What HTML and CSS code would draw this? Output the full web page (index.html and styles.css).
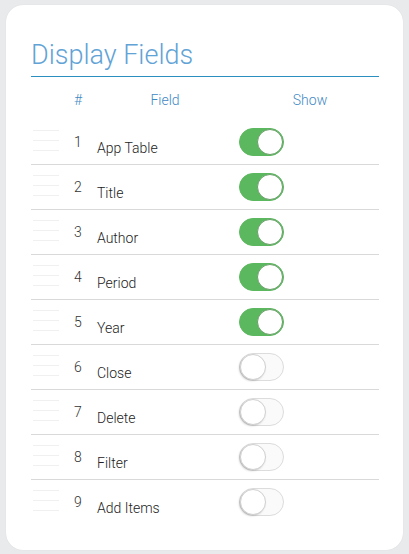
FILE: index.html
```html
<!DOCTYPE html>
<html>
<head>
<meta charset="utf-8">
<link rel="stylesheet" href="styles.css">
</head>
<body>
<div class="card">
  <h1 class="title">Display Fields</h1>
  <div class="head">
    <span></span>
    <span class="h-num">#</span>
    <span class="h-field">Field</span>
    <span class="h-show">Show</span>
  </div>
  <div class="rows">
    <div class="row"><span class="handle"><i></i><i></i><i></i></span><span class="num">1</span><span class="field">App Table</span><span class="toggle on"><b></b></span></div>
    <div class="row"><span class="handle"><i></i><i></i><i></i></span><span class="num">2</span><span class="field">Title</span><span class="toggle on"><b></b></span></div>
    <div class="row"><span class="handle"><i></i><i></i><i></i></span><span class="num">3</span><span class="field">Author</span><span class="toggle on"><b></b></span></div>
    <div class="row"><span class="handle"><i></i><i></i><i></i></span><span class="num">4</span><span class="field">Period</span><span class="toggle on"><b></b></span></div>
    <div class="row"><span class="handle"><i></i><i></i><i></i></span><span class="num">5</span><span class="field">Year</span><span class="toggle on"><b></b></span></div>
    <div class="row"><span class="handle"><i></i><i></i><i></i></span><span class="num">6</span><span class="field">Close</span><span class="toggle"><b></b></span></div>
    <div class="row"><span class="handle"><i></i><i></i><i></i></span><span class="num">7</span><span class="field">Delete</span><span class="toggle"><b></b></span></div>
    <div class="row"><span class="handle"><i></i><i></i><i></i></span><span class="num">8</span><span class="field">Filter</span><span class="toggle"><b></b></span></div>
    <div class="row"><span class="handle"><i></i><i></i><i></i></span><span class="num">9</span><span class="field">Add Items</span><span class="toggle"><b></b></span></div>
  </div>
</div>
</body>
</html>
```
FILE: styles.css
```css
html, body {
  margin: 0;
  padding: 0;
  background: #e9eaeb;
  font-family: Roboto, "Liberation Sans", sans-serif;
}
.card {
  box-sizing: border-box;
  margin: 5px 6px;
  width: 397px;
  height: 545px;
  background: #fff;
  border-radius: 17px;
  box-shadow: 0 0 1px rgba(0,0,0,0.12);
  padding: 35px 24px 0 25px;
}
.title {
  margin: 0;
  font-size: 27px;
  line-height: 31px;
  font-weight: 300;
  color: #62a3d6;
  padding-bottom: 5px;
  border-bottom: 1px solid #2b8fbf;
}
.head, .row {
  display: grid;
  grid-template-columns: 34px 26px 148px 1fr;
}
.head {
  height: 43px;
  align-items: center;
  font-size: 14px;
  font-weight: 300;
  color: #3f89c4;
  padding-top: 3px;
  box-sizing: border-box;
}
.h-num, .h-field, .h-show { text-align: center; }
.h-show { padding-left: 2px; }
.row {
  height: 44px;
  border-bottom: 1px solid #d9d9d9;
  align-items: center;
}
.row:last-child { border-bottom: none; }
.handle {
  display: flex;
  flex-direction: column;
  gap: 9px;
  width: 26px;
  margin-left: 2px;
  margin-top: -4px;
}
.handle i {
  display: block;
  height: 1px;
  background: #f0f0f0;
}
.num {
  text-align: center;
  font-size: 14px;
  font-weight: 300;
  color: #333;
}
.field {
  font-size: 14px;
  font-weight: 300;
  color: #222;
  padding-left: 6px;
  margin-top: 12px;
}
.toggle {
  position: relative;
  box-sizing: border-box;
  width: 45px;
  height: 28px;
  border-radius: 14px;
  background: #fafafa;
  border: 1px solid #dcdcdc;
  margin-top: -1px;
}
.toggle b {
  position: absolute;
  top: 0;
  left: 0;
  box-sizing: border-box;
  width: 26px;
  height: 26px;
  border-radius: 50%;
  background: #fff;
  border: 1px solid #d0d0d0;
  box-shadow: -1px 1px 2px rgba(0,0,0,0.18);
}
.toggle.on {
  background: #5cb85f;
  border-color: #5cb85f;
}
.toggle.on b {
  left: auto;
  right: 0;
  border-color: #6a9f6a;
  box-shadow: none;
}
```
